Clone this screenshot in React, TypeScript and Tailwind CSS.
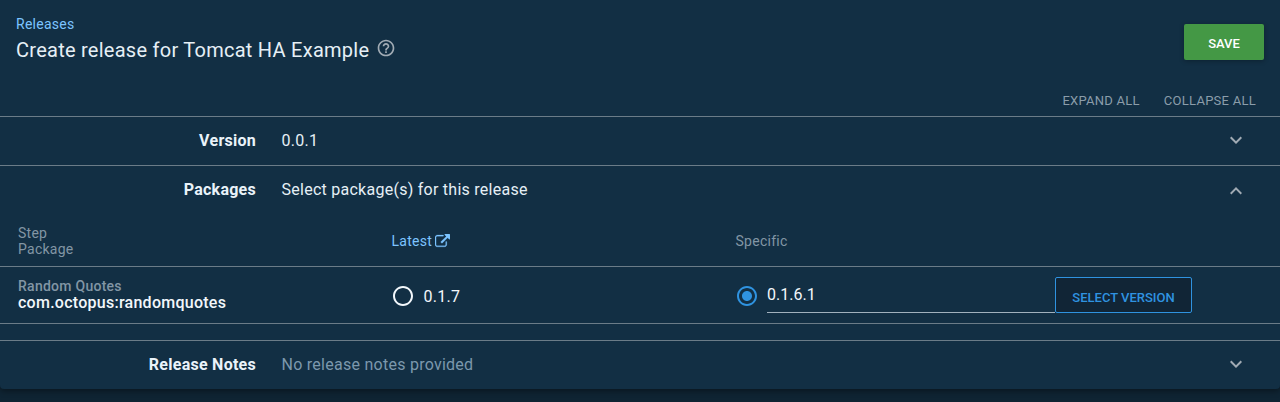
import React from "react";
import { MdExpandLess, MdExpandMore, MdHelpOutline, MdRadioButtonChecked, MdRadioButtonUnchecked } from "react-icons/md";

function ExternalLinkIcon() {
  return (
    <svg viewBox="0 0 1792 1792" className="ml-[3px] size-[15px]" fill="currentColor" stroke="currentColor" strokeWidth="30" aria-hidden="true">
      <path d="M1408 928v320q0 119-84.5 203.5t-203.5 84.5h-832q-119 0-203.5-84.5t-84.5-203.5v-832q0-119 84.5-203.5t203.5-84.5h704q14 0 23 9t9 23v64q0 14-9 23t-23 9h-704q-66 0-113 47t-47 113v832q0 66 47 113t113 47h832q66 0 113-47t47-113v-320q0-14 9-23t23-9h64q14 0 23 9t9 23zm384-864v512q0 26-19 45t-45 19-45-19l-176-176-652 652q-10 10-23 10t-23-10l-114-114q-10-10-10-23t10-23l652-652-176-176q-19-19-19-45t19-45 45-19h512q26 0 45 19t19 45z" />
    </svg>
  );
}

type SectionProps = { label: string; summary: string; open?: boolean; muted?: boolean };

function SectionHeader({ label, summary, open = false, muted = false }: SectionProps) {
  return (
    <div className="flex h-12 items-center border-t border-[#6b7c88] box-content text-base">
      <div className="w-64 text-right font-bold text-[#eaf3fa]">{label}</div>
      <div className={muted ? "ml-[25.5px] flex-1 text-[#7c98ad]" : "ml-[25.5px] flex-1 text-[#e6eff6]"}>{summary}</div>
      {open ? (
        <MdExpandLess className="mr-8 mt-0.5 size-6 text-[#a1abb4]" />
      ) : (
        <MdExpandMore className="mb-0.5 mr-8 size-6 text-[#a1abb4]" />
      )}
    </div>
  );
}

export default function App() {
  return (
    <div className="h-[402px] overflow-hidden bg-[#0f2433] font-['Roboto',sans-serif]">
      <main className="h-[389px] rounded-b bg-[#122f44] tracking-[0.26px] shadow-[0_2px_6px_rgba(0,0,0,0.4)]">
        <header className="flex h-[84px] items-start justify-between px-4">
          <div className="pt-[14px]">
            <a className="block text-sm leading-5 text-[#7cc4ff]">Releases</a>
            <div className="flex items-center">
              <h1 className="text-xl leading-8 text-[#e6eff6]">Create release for Tomcat HA Example</h1>
              <MdHelpOutline className="mb-1 ml-[6.5px] size-5 text-[#a1abb4]" />
            </div>
          </div>
          <button className="mt-6 h-9 w-20 rounded-xs bg-[#449845] pt-[3px] text-[13px] font-medium tracking-normal text-white shadow-[0_1px_5px_rgba(0,0,0,0.3)]">SAVE</button>
        </header>
        <div className="flex h-8 items-center justify-end gap-6 pr-6 pt-[2px] text-[13px] text-[#8b9daa]">
          <button>EXPAND ALL</button>
          <button>COLLAPSE ALL</button>
        </div>

        <SectionHeader label="Version" summary="0.0.1" />
        <SectionHeader label="Packages" summary="Select package(s) for this release" open />

        <div className="grid h-[52px] grid-cols-[391.5px_344px_1fr] items-center pt-[2px] text-sm text-[#8296a5]">
          <div className="pl-[18px] leading-4">
            <div>Step</div>
            <div>Package</div>
          </div>
          <a className="flex items-center text-[#7cc4ff]">Latest<ExternalLinkIcon /></a>
          <div>Specific</div>
        </div>

        <div className="grid h-[58px] grid-cols-[391px_344px_1fr] items-center border-y border-[#6b7c88] text-base text-[#f2f7fb]">
          <div className="pl-[18px] font-medium leading-4">
            <div className="-mt-px mb-px text-sm leading-4 text-[#8296a5]">Random Quotes</div>
            <div>com.octopus:randomquotes</div>
          </div>
          <label className="flex items-center gap-[8.5px] pt-[2px]">
            <MdRadioButtonUnchecked className="size-6" />
            <span className="pt-[2px]">0.1.7</span>
          </label>
          <div className="flex items-center">
            <MdRadioButtonChecked className="mt-[2px] size-6 text-[#2f93e0]" />
            <div className="ml-2 flex h-9 w-72 items-center border-b border-[#a1b1bd] tracking-normal">0.1.6.1</div>
            <button className="h-9 w-[137px] rounded-xs border border-[#2f93e0] bg-[#112536] pt-[5px] text-[13px] font-medium tracking-normal text-[#2f93e0]">SELECT VERSION</button>
          </div>
        </div>

        <div className="h-4" />
        <SectionHeader label="Release Notes" summary="No release notes provided" muted />
      </main>
    </div>
  );
}
